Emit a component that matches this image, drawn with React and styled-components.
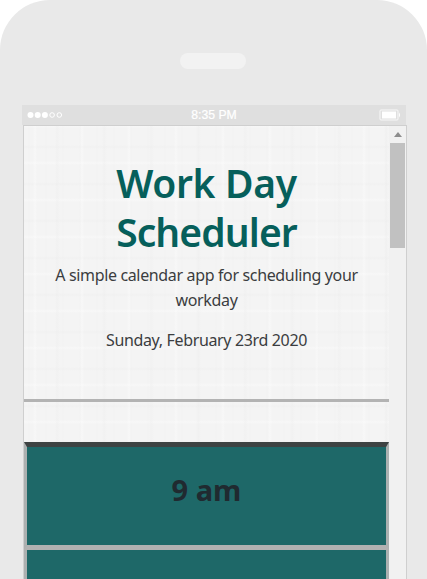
import React from "react";
import styled, { createGlobalStyle } from "styled-components";

const GlobalStyle = createGlobalStyle`
  * { box-sizing: border-box; }
  body { margin: 0; background: #fff; overflow: hidden; }
`;

const Phone = styled.main`
  width: 427px;
  height: 579px;
  padding: 53px 20px 0 22px;
  border-radius: 50px 50px 0 0;
  background: #e9e9e9;
  overflow: hidden;
  font-family: "Noto Sans", "Open Sans", sans-serif;
`;

const Speaker = styled.div`
  width: 66px;
  height: 16px;
  margin: 0 0 36px 158px;
  border-radius: 8px;
  background: #f2f2f2;
`;

const StatusBar = styled.header`
  display: grid;
  grid-template-columns: 1fr auto 1fr;
  align-items: center;
  width: 384px;
  height: 20px;
  padding: 0 5px;
  background: #dfdfdf;
  color: #fff;
  font: 12.2px "Liberation Sans", Arial, sans-serif;
`;

const Time = styled.span`
  -webkit-text-stroke: 0.2px #fff;
`;

const Battery = styled.svg`
  justify-self: end;
`;

const Screen = styled.section`
  display: flex;
  width: 384px;
  height: 454px;
  margin-left: 1px;
  border: solid #cfcfcf;
  border-width: 1px 1px 0;
  overflow: hidden;
`;

const Page = styled.div`
  width: 365px;
  flex: none;
  background-color: #f4f4f4;
  background-image:
    repeating-linear-gradient(90deg, transparent 0 9px, #ffffff50 11px, transparent 13px 31px, #e9e9e940 33px, transparent 36px 47px),
    repeating-linear-gradient(0deg, transparent 0 7px, #ffffff50 9px, transparent 11px 23px, #e9e9e940 25px, transparent 27px 37px),
    repeating-linear-gradient(90deg, transparent 0 4px, #ebebeb38 5px, transparent 6px 17px);
`;

const Intro = styled.div`
  height: 276px;
  padding-top: 32px;
  border-bottom: 3px solid #b3b3b3;
  color: #3b3d40;
  text-align: center;
`;

const Title = styled.h1`
  margin: 0 0 7px;
  color: #065f5b;
  font-size: 39px;
  font-weight: 600;
  line-height: 49px;
`;

const TitleLine = styled.span`
  display: block;
  letter-spacing: ${({ $tracking }) => $tracking};
`;

const Copy = styled.p`
  margin: 0 0 16px;
  font-size: 16px;
  line-height: 24.5px;
  letter-spacing: ${({ $tracking }) => $tracking};
`;

const Blocks = styled.div`
  margin-top: 40px;
`;

const HourBlock = styled.div`
  display: flex;
  justify-content: center;
  height: ${({ $first }) => ($first ? "108px" : "103px")};
  padding-top: 22px;
  border: 3px solid #acb0b0;
  border-top: ${({ $first }) => ($first ? "5px solid #3e4343" : "0")};
  border-bottom: 5px solid #b2b2b2;
  background: #1e6868;
  color: #202a30;
  font-size: 29px;
  font-weight: 700;
  line-height: 42px;
`;

const Scrollbar = styled.div`
  width: 17px;
  background: #f1f1f1;
  display: flex;
  flex-direction: column;
  align-items: center;
`;

const UpArrow = styled.svg`
  margin: 6px 0 6px;
`;

const Thumb = styled.div`
  width: 15px;
  height: 105px;
  background: #c1c1c1;
`;

export default function App() {
  return (
    <>
      <GlobalStyle />
      <Phone>
        <Speaker />
        <StatusBar>
          <svg width="36" height="8" viewBox="0 0 36 8" fill="#fff" stroke="#fff">
            {[3.5, 10.7, 17.9].map((x) => <circle key={x} cx={x} cy="4" r="3" stroke="none" />)}
            {[25.1, 32.3].map((x) => <circle key={x} cx={x} cy="4" r="2.3" fill="none" />)}
          </svg>
          <Time>8:35 PM</Time>
          <Battery width="22" height="12" viewBox="0 0 22 12">
            <rect x="1" y="1" width="18" height="10" rx="1" fill="none" stroke="#f8f8f8" />
            <rect x="3" y="2.5" width="14" height="7" fill="#fff" />
            <path d="M20 3.5q2 2.5 0 5z" fill="#fff" />
          </Battery>
        </StatusBar>
        <Screen>
          <Page>
            <Intro>
              <Title>
                <TitleLine $tracking="-0.35px">Work Day</TitleLine>
                <TitleLine $tracking="-0.9px">Scheduler</TitleLine>
              </Title>
              <Copy $tracking="-0.35px">A simple calendar app for scheduling your<br />workday</Copy>
              <Copy $tracking="-0.35px">Sunday, February 23rd 2020</Copy>
            </Intro>
            <Blocks>
              <HourBlock $first>9 am</HourBlock>
              <HourBlock />
            </Blocks>
          </Page>
          <Scrollbar>
            <UpArrow width="8" height="5" viewBox="0 0 8 5"><path d="M0 5L4 0L8 5z" fill="#8d8d8d" /></UpArrow>
            <Thumb />
          </Scrollbar>
        </Screen>
      </Phone>
    </>
  );
}
